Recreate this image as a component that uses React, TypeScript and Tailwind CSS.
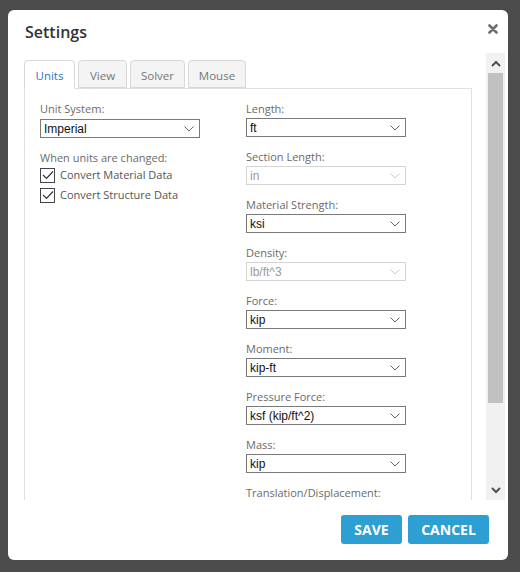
import React from "react";

type Field = {
  label: string;
  value?: string;
  disabled?: boolean;
};

// the last field's dropdown sits below the visible part of the scroll area
const unitFields: Field[] = [
  { label: "Length:", value: "ft" },
  { label: "Section Length:", value: "in", disabled: true },
  { label: "Material Strength:", value: "ksi" },
  { label: "Density:", value: "lb/ft^3", disabled: true },
  { label: "Force:", value: "kip" },
  { label: "Moment:", value: "kip-ft" },
  { label: "Pressure Force:", value: "ksf (kip/ft^2)" },
  { label: "Mass:", value: "kip" },
  { label: "Translation/Displacement:" },
];

const tabs = [
  { name: "Units", width: "w-[51px]" },
  { name: "View", width: "w-[49px]" },
  { name: "Solver", width: "w-[55px]" },
  { name: "Mouse", width: "w-[58px]" },
];

function Chevron({ className = "" }: { className?: string }) {
  return (
    <svg width="10" height="6" viewBox="0 0 10 6" className={className}>
      <path d="M0.5 0.5 L5 5 L9.5 0.5" fill="none" stroke="currentColor" strokeWidth="1" />
    </svg>
  );
}

function Select({ value, disabled }: { value: string; disabled?: boolean }) {
  return (
    <div
      className={`flex h-[19px] w-[160px] items-center justify-between border pl-[3px] pr-[5px] text-[12px] ${
        disabled ? "border-[#d4d4d4] text-[#9a9a9a]" : "border-[#7a7a7a] text-[#111]"
      }`}
      style={{ fontFamily: '"Liberation Sans", Arial, sans-serif' }}
    >
      <span className="leading-none">{value}</span>
      <Chevron className={disabled ? "text-[#c8c8c8]" : "text-[#666]"} />
    </div>
  );
}

function Checkbox({ label }: { label: string }) {
  return (
    <label className="flex h-[20px] items-center gap-[5px]">
      <span className="flex h-[15px] w-[15px] items-center justify-center border border-[#444] bg-white">
        <svg width="12" height="10" viewBox="0 0 12 10">
          <path d="M1 5 L4.5 8.5 L11 1.5" fill="none" stroke="#333" strokeWidth="1.2" />
        </svg>
      </span>
      <span className="text-[11px] text-[#555]">{label}</span>
    </label>
  );
}

function Scrollbar() {
  return (
    <div className="flex w-[19px] flex-col bg-[#f1f1f1]">
      <div className="flex h-[20px] items-center justify-center text-[#505050]">
        <svg width="10" height="7" viewBox="0 0 10 7">
          <path d="M1 6 L5 2 L9 6" fill="none" stroke="currentColor" strokeWidth="2" />
        </svg>
      </div>
      <div className="mx-[2px] h-[330px] bg-[#c1c1c1]" />
      <div className="flex-1" />
      <div className="flex h-[20px] items-center justify-center text-[#505050]">
        <svg width="10" height="7" viewBox="0 0 10 7">
          <path d="M1 1 L5 5 L9 1" fill="none" stroke="currentColor" strokeWidth="2" />
        </svg>
      </div>
    </div>
  );
}

export default function App() {
  return (
    <div
      className="h-[572px] w-[520px] bg-[#4b4b4b] pl-[8px] pt-[10px]"
      style={{ fontFamily: '"Open Sans", "Noto Sans", sans-serif' }}
    >
      <div className="flex h-[550px] w-[500px] flex-col rounded-[6px] bg-white">
        {/* header */}
        <div className="flex h-[43px] items-start justify-between pl-[17px] pr-[10px] pt-[11px]">
          <h1 className="text-[16px] font-semibold leading-[22px] text-[#333]">Settings</h1>
          <svg width="10" height="10" viewBox="0 0 10 10" className="mt-[3px]">
            <path d="M1.5 1.5 L8.5 8.5 M8.5 1.5 L1.5 8.5" stroke="#6e6e6e" strokeWidth="2.6" strokeLinecap="round" />
          </svg>
        </div>

        {/* scrolling body */}
        <div className="flex h-[447px] pr-[3px]">
          <div className="flex-1 overflow-hidden pl-[16px] pr-[14px] pt-[7px]">
            <div className="flex h-[28px] gap-[3px]">
              {tabs.map((tab, i) => (
                <div
                  key={tab.name}
                  className={`flex items-center justify-center rounded-t-[4px] border border-[#d8d8d8] pt-[3px] text-[11.5px] ${tab.width} ${
                    i === 0
                      ? "relative z-10 -mb-px border-b-white bg-white text-[#2a78c2]"
                      : "bg-[#f4f4f4] text-[#777]"
                  }`}
                >
                  {tab.name}
                </div>
              ))}
            </div>
            <div className="flex h-[600px] gap-[46px] border border-[#e0e0e0] pl-[15px] pt-[11px]">
              <div className="w-[160px]">
                <div className="mb-[2px] text-[11px] leading-[17px] text-[#6a6a6a]">Unit System:</div>
                <Select value="Imperial" />
                <div className="mt-[12px] text-[11px] leading-[15px] text-[#6a6a6a]">When units are changed:</div>
                <Checkbox label="Convert Material Data" />
                <Checkbox label="Convert Structure Data" />
              </div>
              <div className="w-[160px]">
                {unitFields.map((f) => (
                  <div key={f.label} className="mb-[11px]">
                    <div className="mb-px text-[11px] leading-[17px] text-[#6a6a6a]">{f.label}</div>
                    {f.value && <Select value={f.value} disabled={f.disabled} />}
                  </div>
                ))}
              </div>
            </div>
          </div>
          <Scrollbar />
        </div>

        {/* footer */}
        <div className="flex justify-end gap-[6px] pr-[19px] pt-[15px]">
          <button className="h-[29px] w-[61px] rounded-[3px] bg-[#2e9fd2] text-[14px] font-bold text-white">
            SAVE
          </button>
          <button className="h-[29px] w-[81px] rounded-[3px] bg-[#2e9fd2] text-[14px] font-bold text-white">
            CANCEL
          </button>
        </div>
      </div>
    </div>
  );
}
